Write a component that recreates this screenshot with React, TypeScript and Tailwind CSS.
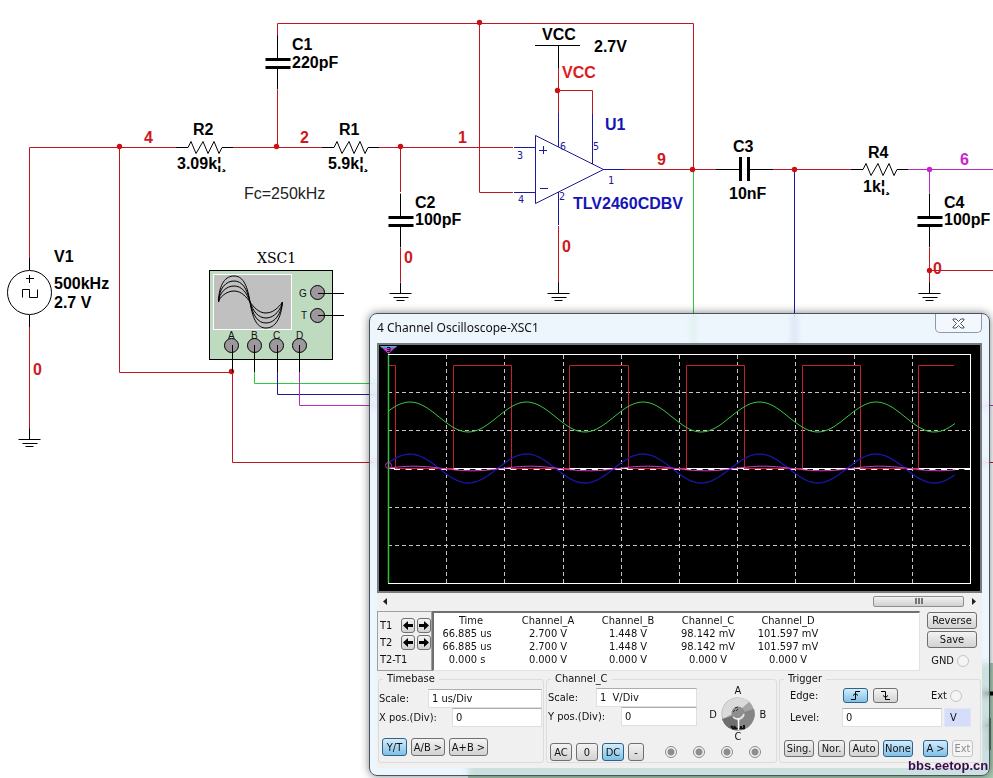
import { useState } from "react";
import type { ReactNode } from "react";

const RED = "#c01620";
const BLUE = "#1a1a9c";
const MAGENTA = "#b62bc0";
const GREEN = "#2fca3c";

function Wire({ d, color = RED, w = 1 }: { d: string; color?: string; w?: number }) {
  return <path d={d} stroke={color} strokeWidth={w} fill="none" />;
}

function Resistor({ x, y }: { x: number; y: number }) {
  return (
    <path
      d={`M${x} ${y}h12l3 -6l5 12l7 -12l5 12l6 -12l5 12l3 -6h11`}
      stroke="#000"
      fill="none"
    />
  );
}

function Ground({ x, y }: { x: number; y: number }) {
  return (
    <path
      d={`M${x} ${y - 11}V${y}M${x - 11} ${y}h22M${x - 7} ${y + 4}h15M${x - 4} ${y + 7}h8`}
      stroke="#000"
      fill="none"
    />
  );
}

function Cap({ x, y }: { x: number; y: number }) {
  return (
    <>
      <path d={`M${x - 12} ${y}h25M${x - 12} ${y + 8}h25`} stroke="#000" strokeWidth="3" />
      <path d={`M${x} ${y - 24}V${y}M${x} ${y + 8}v22`} stroke="#000" />
    </>
  );
}

const labels: [number, number, string, string][] = [
  [292, 50, "C1", "#000"],
  [292, 68, "220pF", "#000"],
  [193, 135, "R2", "#000"],
  [177, 169, "3.09k¦¸", "#000"],
  [339, 135, "R1", "#000"],
  [328, 169, "5.9k¦¸", "#000"],
  [415, 208, "C2", "#000"],
  [415, 225, "100pF", "#000"],
  [542, 40, "VCC", "#000"],
  [594, 52, "2.7V", "#000"],
  [562, 78, "VCC", "#dc1c1c"],
  [605, 130, "U1", "#1414b8"],
  [573, 209, "TLV2460CDBV", "#1414b8"],
  [733, 152, "C3", "#000"],
  [729, 199, "10nF", "#000"],
  [868, 158, "R4", "#000"],
  [863, 192, "1k¦¸", "#000"],
  [944, 208, "C4", "#000"],
  [944, 225, "100pF", "#000"],
  [54, 262, "V1", "#000"],
  [54, 289, "500kHz", "#000"],
  [54, 308, "2.7 V", "#000"],
  [144, 143, "4", "#d01822"],
  [300, 143, "2", "#d01822"],
  [458, 143, "1", "#d01822"],
  [657, 165, "9", "#d01822"],
  [960, 165, "6", "#cc22cc"],
  [404, 263, "0", "#d01822"],
  [562, 252, "0", "#d01822"],
  [33, 375, "0", "#d01822"],
  [933, 274, "0", "#d01822"],
];

const pins: [number, number, string][] = [
  [517, 159, "3"],
  [518, 203, "4"],
  [560, 150, "6"],
  [593, 150, "5"],
  [608, 184, "1"],
  [559, 200, "2"],
];

const dots: [number, number][] = [
  [119, 146], [276, 146], [479, 22], [557, 90], [400, 146],
  [692, 169], [794, 169], [929, 270], [231, 371],
];

function Schematic() {
  return (
    <svg className="block h-[778px] w-full font-['Liberation_Sans',Arial,sans-serif]" role="img" aria-label="Low-pass filter schematic">
      <rect x="468" y="663" width="2000" height="200" fill="#aacdb4" />
      <path d="M982 693.5h2000" stroke="#000" strokeWidth="4" />
      <path d="M983 725.5h6M989.5 718v32" stroke="#15231a" strokeWidth="2" />

      <Wire d="M29.5 258V147.5H176M232 147.5H322M378 147.5H513M277.5 36V23.5H693.5V169.5M277.5 90V147M479.5 23V192.5H513" />
      <Wire d="M119.5 147V372.5H232.5M232.5 372V462.5H2000M29.5 327V429" />
      <Wire d="M400.5 147V192M400.5 248V282M558.5 68V113M558.5 90.5H592.5V114M558.5 226V283M625 169.5H716M773 169.5H851M929.5 248V283M929 270.5H2000" />
      <Wire color={GREEN} d="M693.5 170V500M254.5 372V383.5H500" />
      <Wire color={BLUE} d="M794.5 170V500M277.5 372V394.5H500" />
      <Wire color={MAGENTA} d="M299.5 372V405.5H2000M907 169.5H2000M929.5 170V193" />
      <Wire color={BLUE} d="M514 147.5H535M514 192.5H535M558.5 113V147M592.5 114V164M603 169.5H625M558.5 192V225M535.5 135.5L603.5 169.5L535.5 203.5ZM539 150.5h8M543.5 146v8M540 188.5h8" />
      <Wire color="#000" d="M535 45.5H580M558.5 45V68" />

      <Resistor x={176} y={147.5} />
      <Resistor x={322} y={147.5} />
      <Resistor x={851} y={169.5} />
      <Cap x={277.5} y={59.5} />
      <Cap x={400.5} y={217.5} />
      <Cap x={929.5} y={217.5} />
      <path d="M740.5 157v24M748.5 157v24" stroke="#000" strokeWidth="3" />
      <path d="M716 169.5H740M749 169.5H773" stroke="#000" />
      <Ground x={400.5} y={293.5} />
      <Ground x={558.5} y={293.5} />
      <Ground x={929.5} y={293.5} />
      <Ground x={29.5} y={439.5} />

      {dots.map(([x, y]) => (
        <circle key={`${x}-${y}`} cx={x + 0.5} cy={y + 0.5} r="2.7" fill="#cc1018" />
      ))}
      <circle cx="929.5" cy="169.5" r="2.7" fill="#cc22cc" />

      <g stroke="#000" fill="none">
        <circle cx="29.5" cy="292.5" r="22" />
        <path d="M29.5 258v12M29.5 315v12M26 278.5h8M29.5 275v8M22.5 297.5v-8h7v8h8v-8" />
      </g>

      <g stroke="#000">
        <rect x="209.5" y="270.5" width="123" height="89" fill="#bfdbbf" />
        <rect x="213.5" y="274.5" width="78" height="55" fill="#c0c0c0" stroke="#fff" />
        {[[275, 329], [280, 324], [285, 319], [290, 314]].map(([t, b]) => (
          <path
            key={t}
            fill="none"
            d={`M218.5 302C219 ${t + 8} 226 ${t + 1} 234 ${t + 1}C242 ${t + 1} 247 ${t + 8} 250 302C253 ${b - 8} 258 ${b - 1} 266 ${b - 1}C275 ${b - 1} 281 ${b - 10} 282.5 302`}
          />
        ))}
        <g fill="#9d989d">
          <circle cx="317.5" cy="292.5" r="7" />
          <circle cx="317.5" cy="315.5" r="7" />
          <circle cx="231.5" cy="345.5" r="7" />
          <circle cx="254.5" cy="345.5" r="7" />
          <circle cx="276.5" cy="345.5" r="7" />
          <circle cx="299.5" cy="345.5" r="7" />
        </g>
        <path d="M318 293.5h26M318 315.5h26M232.5 345v27M254.5 345v27M277.5 345v27M299.5 345v27" />
      </g>
      <g fontSize="10" fill="#111">
        <text x="299" y="297">G</text>
        <text x="301" y="319">T</text>
        <text x="228" y="339">A</text>
        <text x="251" y="339">B</text>
        <text x="273" y="339">C</text>
        <text x="296" y="339">D</text>
      </g>
      <text x="257" y="263" fontSize="14" className="font-['DejaVu_Serif',serif]">XSC1</text>
      <text x="244" y="199" fontSize="16" fill="#222">Fc=250kHz</text>

      <g fontSize="16" fontWeight="700">
        {labels.map(([x, y, t, c]) => (
          <text key={`${x}-${y}`} x={x} y={y} fill={c}>{t}</text>
        ))}
      </g>
      <g fontSize="10" fill={BLUE} className="font-['DejaVu_Sans_Mono',monospace]">
        {pins.map(([x, y, t]) => (
          <text key={`${x}-${y}`} x={x} y={y}>{t}</text>
        ))}
      </g>
    </svg>
  );
}

function sine(mid: number, amp: number, phase: number) {
  const pts: string[] = [];
  for (let x = 388; x <= 955; x += 3) {
    const y = mid - amp * Math.cos(((x - phase) / 116.5) * 2 * Math.PI);
    pts.push(`${x} ${y.toFixed(1)}`);
  }
  return "M" + pts.join("L");
}

const square =
  "M388 365.5H395.5V468.5H453.5V365.5H511.5V468.5H569.5V365.5H628.5V468.5H686.5V365.5H744.5V468.5H802.5V365.5H860.5V468.5H918.5V365.5H954";

function Trace() {
  return (
    <svg viewBox="379 345 601 246" className="block h-[246px] w-full bg-black" preserveAspectRatio="none" role="img" aria-label="Channel traces">
      <path
        d="M446.5 355V583M504.5 355V583M563.5 355V583M621.5 355V583M679.5 355V583M737.5 355V583M795.5 355V583M854.5 355V583M912.5 355V583M388 392.5H970M388 430.5H970M388 507.5H970M388 545.5H970"
        stroke="#c4c4c4"
        strokeDasharray="4 3"
      />
      <rect x="388.5" y="354.5" width="582" height="229" fill="none" stroke="#fff" />
      <path d="M388 468.5H970" stroke="#fff" />
      <path d="M394 469.5H970" stroke="#fff" strokeDasharray="6 5.64" />
      <path d={square} stroke="#c8202a" fill="none" />
      <path d="M395 468.5h58M511 468.5h58M628 468.5h58M744 468.5h58M860 468.5h58" stroke="#e0203c" />
      <path d={sine(417, 15, 410)} stroke="#3cc244" fill="none" />
      <path d={sine(468.5, 14.5, 410)} stroke="#1616a8" strokeWidth="1.3" fill="none" />
      <path d={sine(468.5, 2.3, 414)} stroke="#d038c0" fill="none" />
      <path d="M388.5 355V583" stroke="#35c040" strokeWidth="1.5" />
      <circle cx="388.5" cy="465.5" r="3" fill="none" stroke="#c030c8" />
      <path d="M380 346h17l-8.5 8z" fill="#c83cd8" />
      <path d="M380 346h17l-1.5 1.5h-14z" fill="#30c8e0" />
      <path d="M387 347.5h3v4h-3M387 349.5h3" stroke="#111" fill="none" />
    </svg>
  );
}

function Btn({ children, active, className = "", label, disabled, onClick }: {
  children: ReactNode; active?: boolean; className?: string; label?: string; disabled?: boolean; onClick?: () => void;
}) {
  const look = disabled
    ? "border-[#c4c4c4] bg-[#f4f4f4] text-[#8c8c8c]"
    : active
      ? "border-[#2c628b] bg-linear-to-b from-[#d3ecfa] to-[#7fc0e8]"
      : "border-[#707070] bg-linear-to-b from-[#f3f3f3] to-[#d2d2d2]";
  return (
    <button
      type="button"
      aria-label={label}
      aria-pressed={active}
      disabled={disabled}
      onClick={onClick}
      className={`flex shrink-0 items-center justify-center rounded-[3px] border whitespace-nowrap ${look} ${className}`}
    >
      {children}
    </button>
  );
}

function Arrow({ flip }: { flip?: boolean }) {
  return (
    <svg width="10" height="9" viewBox="0 0 10 9" className={flip ? "rotate-180" : ""}>
      <path d="M0 4.5L5 0v3h5v3H5v3z" fill="#000" />
    </svg>
  );
}

const columns = ["Time", "Channel_A", "Channel_B", "Channel_C", "Channel_D"];
const rows = [
  ["66.885 us", "2.700 V", "1.448 V", "98.142 mV", "101.597 mV"],
  ["66.885 us", "2.700 V", "1.448 V", "98.142 mV", "101.597 mV"],
  ["0.000 s", "0.000 V", "0.000 V", "0.000 V", "0.000 V"],
];

const radio = "m-0 size-3 appearance-none rounded-full border border-[#c4c4c4] bg-[#f4f4f4]";
const chRadio =
  "m-0 size-3 appearance-none rounded-full border border-[#8c8c8c] bg-[radial-gradient(circle,#8d8d8d_0_3px,#f4f4f4_4px)]";
const field = "h-[19px] min-w-0 border border-[#dcdfe4] border-t-[#abadb3] bg-white outline-none";
const group = "min-w-0 rounded-[3px] border border-[#dcdcdc]";
const legend = "ml-1 px-1 leading-3";

function Knob() {
  return (
    <div className="grid grid-cols-[14px_36px_14px] place-items-center">
      <span className="col-span-3 leading-3">A</span>
      <span>D</span>
      <svg width="34" height="34" viewBox="0 0 34 34">
        <circle cx="17" cy="17" r="16.5" fill="#a5a5a5" />
        <path d="M2 22A16 16 0 0 1 28 5L20 12A6 6 0 0 0 11 17z" fill="#dadada" />
        <path d="M33 12A16.5 16.5 0 0 1 17 33.5V24A7 7 0 0 0 23 15z" fill="#858585" />
        <path d="M1 22A16.5 16.5 0 0 0 17 33.5V24L11 19z" fill="#6f6f6f" />
        <circle cx="17" cy="16" r="6.5" fill="#8e8e8e" />
        <path d="M12 20A6.5 6.5 0 0 0 23 17" stroke="#e8e8e8" strokeWidth="1.5" fill="none" />
        <path d="M12 15l2 -2M14 11l3 -1M15 14l2 -2" stroke="#333" />
        <path d="M10 29l2 2M13 29l2 3M20 29v3M23 28v3" stroke="#111" strokeWidth="2" />
        <path d="M11 31.5h13" stroke="#111" strokeWidth="1.5" />
        <path d="M17.5 21V33" stroke="#fff" strokeWidth="1.5" />
      </svg>
      <span>B</span>
      <span className="col-span-3 leading-3">C</span>
    </div>
  );
}

function Oscilloscope() {
  const [mode, setMode] = useState("Y/T");
  const [coupling, setCoupling] = useState("DC");
  const [trigger, setTrigger] = useState("None");
  const [edge, setEdge] = useState("rise");

  return (
    <section
      aria-label="4 Channel Oscilloscope"
      className="absolute top-[313px] left-[369px] w-[621px] rounded-lg border border-[#4b5560] bg-[#e1eefc]/60 px-[7px] pb-[7px] text-[11px] leading-[13px] text-[#111] shadow-[0_0_8px_rgba(0,0,0,0.5)] backdrop-blur-[3px] font-['DejaVu_Sans_Condensed','DejaVu_Sans',sans-serif]"
    >
      <header className="flex h-[29px] items-start justify-between">
        <h1 className="pt-[6px] text-[12px] leading-4 font-['Noto_Sans','Open_Sans',sans-serif]">4 Channel Oscilloscope-XSC1</h1>
        <button type="button" aria-label="Close" className="flex h-[19px] w-[47px] items-center justify-center rounded-b-[5px] border border-t-0 border-[#8d99a6] bg-white/30">
          <svg width="13" height="11" viewBox="0 0 13 11">
            <path d="M1 1h3l2.5 2.5L9 1h3v1L8.500 5.500L12 9v1H9L6.500 7.500L4 10H1V9l3.500-3.500L1 2z" fill="#fff" stroke="#4c535c" />
          </svg>
        </button>
      </header>

      <div className="bg-[#f0f0f0]">
        <div className="border-2 border-[#777a7e]">
          <Trace />
        </div>

        <div className="flex h-[18px] items-center justify-between px-[6px] pb-[2px]">
          <button type="button" aria-label="Scroll left">
            <svg width="5" height="7" viewBox="0 0 5 7"><path d="M4 0v7L0 3.5z" fill="#222" /></svg>
          </button>
          <div className="flex items-center gap-[7px]">
            <div className="flex h-[11px] w-[91px] items-center justify-center gap-px rounded-[2px] border border-[#8f8f8f] bg-linear-to-b from-[#f2f2f2] to-[#cfcfcf]">
              <i className="h-[6px] w-[2px] bg-[#777]" />
              <i className="h-[6px] w-[2px] bg-[#777]" />
              <i className="h-[6px] w-[2px] bg-[#777]" />
            </div>
            <button type="button" aria-label="Scroll right">
              <svg width="5" height="7" viewBox="0 0 5 7"><path d="M1 0v7L5 3.5z" fill="#222" /></svg>
            </button>
          </div>
        </div>

        <div className="flex h-[60px]">
          <div className="flex w-[55px] shrink-0 flex-col gap-px border border-[#a0a0a0] pt-[5px] pl-[2px]">
            {["T1", "T2"].map((t) => (
              <div key={t} className="flex h-4 items-center gap-[2px]">
                <span className="w-[19px]">{t}</span>
                <Btn label={`${t} left`} className="h-[15px] w-[14px]"><Arrow /></Btn>
                <Btn label={`${t} right`} className="h-[15px] w-[14px]"><Arrow flip /></Btn>
              </div>
            ))}
            <span className="pt-[2px]">T2-T1</span>
          </div>
          <div className="min-w-0 flex-1 border-t-2 border-r border-b border-l-2 border-t-[#707070] border-r-[#e2e2e2] border-b-[#e2e2e2] border-l-[#707070] bg-white pt-px">
            <table className="w-[394px] table-fixed border-collapse text-center">
              <thead>
                <tr>
                  {columns.map((c) => (
                    <th key={c} scope="col" className="w-[80px] p-0 font-normal first:w-[74px]">{c}</th>
                  ))}
                </tr>
              </thead>
              <tbody>
                {rows.map((r, i) => (
                  <tr key={i}>
                    {r.map((v, j) => (
                      <td key={j} className="p-0 first:pr-2">{v}</td>
                    ))}
                  </tr>
                ))}
              </tbody>
            </table>
          </div>
          <div className="flex w-[62px] shrink-0 flex-col gap-[2px] pt-px pr-[5px] pl-[7px]">
            <Btn className="h-[17px]">Reverse</Btn>
            <Btn className="h-[17px]">Save</Btn>
            <label className="flex items-center justify-end gap-[3px] pt-1 pr-[8px]">
              GND
              <input type="radio" name="gnd" className={radio} />
            </label>
          </div>
        </div>

        <div className="flex items-stretch gap-[2px] px-px pt-[2px] pb-[5px]">
          <fieldset className={`${group} w-[166px] shrink-0 pb-[6px]`}>
            <legend className={legend}>Timebase</legend>
            <div className="flex flex-col pt-1 pr-px">
              <div className="flex items-center">
                <label htmlFor="tb-scale" className="w-[49px]">Scale:</label>
                <input id="tb-scale" defaultValue="1 us/Div" className={`${field} flex-1 pl-[3px]`} />
              </div>
              <div className="flex items-center">
                <label htmlFor="tb-pos" className="w-[73px] whitespace-nowrap">X pos.(Div):</label>
                <input id="tb-pos" defaultValue="0" className={`${field} flex-1 pl-[3px]`} />
              </div>
              <div className="flex gap-1 pt-[11px] pl-[3px]">
                <Btn className="h-[18px] w-[25px]" active={mode === "Y/T"} onClick={() => setMode("Y/T")}>Y/T</Btn>
                <Btn className="h-[18px] w-[34px]" active={mode === "A/B"} onClick={() => setMode("A/B")}>A/B &gt;</Btn>
                <Btn className="h-[18px] w-[39px]" active={mode === "A+B"} onClick={() => setMode("A+B")}>A+B &gt;</Btn>
              </div>
            </div>
          </fieldset>

          <fieldset className={`${group} w-[231px] shrink-0`}>
            <legend className={legend}>Channel_C</legend>
            <div className="flex h-[54px] gap-[9px]">
              <div className="flex w-[150px] flex-col pt-[3px] pl-px">
                <div className="flex items-center">
                  <label htmlFor="ch-scale" className="w-[48px]">Scale:</label>
                  <input id="ch-scale" defaultValue="1  V/Div" className={`${field} flex-1 pl-[3px]`} />
                </div>
                <div className="flex items-center">
                  <label htmlFor="ch-pos" className="w-[73px] whitespace-nowrap">Y pos.(Div):</label>
                  <input id="ch-pos" defaultValue="0" className={`${field} flex-1 pl-[3px]`} />
                </div>
              </div>
              <Knob />
            </div>
            <div className="flex items-center pt-1 pl-[3px]">
              <div className="flex gap-1">
                <Btn className="h-[18px] w-[22px]" active={coupling === "AC"} onClick={() => setCoupling("AC")}>AC</Btn>
                <Btn className="h-[18px] w-[22px]" active={coupling === "0"} onClick={() => setCoupling("0")}>0</Btn>
                <Btn className="h-[18px] w-[22px]" active={coupling === "DC"} onClick={() => setCoupling("DC")}>DC</Btn>
                <Btn className="h-[18px] w-4">-</Btn>
              </div>
              <div className="flex gap-4 pl-[21px]">
                {["A", "B", "C", "D"].map((c) => (
                  <input key={c} type="radio" name="channel" aria-label={`Channel ${c}`} className={chRadio} />
                ))}
              </div>
            </div>
          </fieldset>

          <fieldset className={`${group} flex-1`}>
            <legend className={legend}>Trigger</legend>
            <div className="flex items-center pt-[3px] pl-[10px]">
              <span className="w-[53px]">Edge:</span>
              <div className="flex gap-[5px]">
                <Btn label="Rising edge" className="h-[15px] w-[25px]" active={edge === "rise"} onClick={() => setEdge("rise")}>
                  <svg width="12" height="9" viewBox="0 0 12 9"><path d="M1 8.5h4.5v-8H10M3 4.5l2.5-2l2.5 2" stroke="#000" fill="none" /></svg>
                </Btn>
                <Btn label="Falling edge" className="h-[15px] w-[25px]" active={edge === "fall"} onClick={() => setEdge("fall")}>
                  <svg width="12" height="9" viewBox="0 0 12 9"><path d="M1 .5h4.5v8H10M3 4.5l2.5 2l2.5-2" stroke="#000" fill="none" /></svg>
                </Btn>
              </div>
              <label className="ml-auto flex items-center gap-[3px] pr-[18px]">
                Ext
                <input type="radio" name="ext" className={radio} />
              </label>
            </div>
            <div className="flex items-center pt-[5px] pr-[9px] pl-[10px]">
              <label htmlFor="level" className="w-[52px]">Level:</label>
              <input id="level" defaultValue="0" className={`${field} flex-1 pl-[3px]`} />
              <span className="ml-[2px] flex h-[19px] w-[27px] items-center justify-center border border-[#e4e6ee] bg-[#d6dcfb] pr-2">V</span>
            </div>
            <div className="flex gap-1 pt-[13px] pl-1">
              {["Sing.", "Nor.", "Auto", "None"].map((t) => (
                <Btn
                  key={t}
                  active={trigger === t}
                  onClick={() => setTrigger(t)}
                  className={t === "Nor." ? "h-[17px] w-[27px]" : "h-[17px] w-[30px]"}
                >
                  {t}
                </Btn>
              ))}
              <div className="flex gap-1 pl-[6px]">
                <Btn active className="h-[17px] w-[25px]">A &gt;</Btn>
                <Btn disabled className="h-[17px] w-[21px]">Ext</Btn>
              </div>
            </div>
          </fieldset>
        </div>
      </div>
    </section>
  );
}

export default function App() {
  return (
    <main className="relative min-h-screen overflow-hidden bg-white">
      <Schematic />
      <Oscilloscope />
      <span className="absolute top-[758px] left-[908px] text-[13px] leading-4 font-bold text-[#3a0a4e] font-['Liberation_Sans',Arial,sans-serif]">
        bbs.eetop.cn
      </span>
    </main>
  );
}
